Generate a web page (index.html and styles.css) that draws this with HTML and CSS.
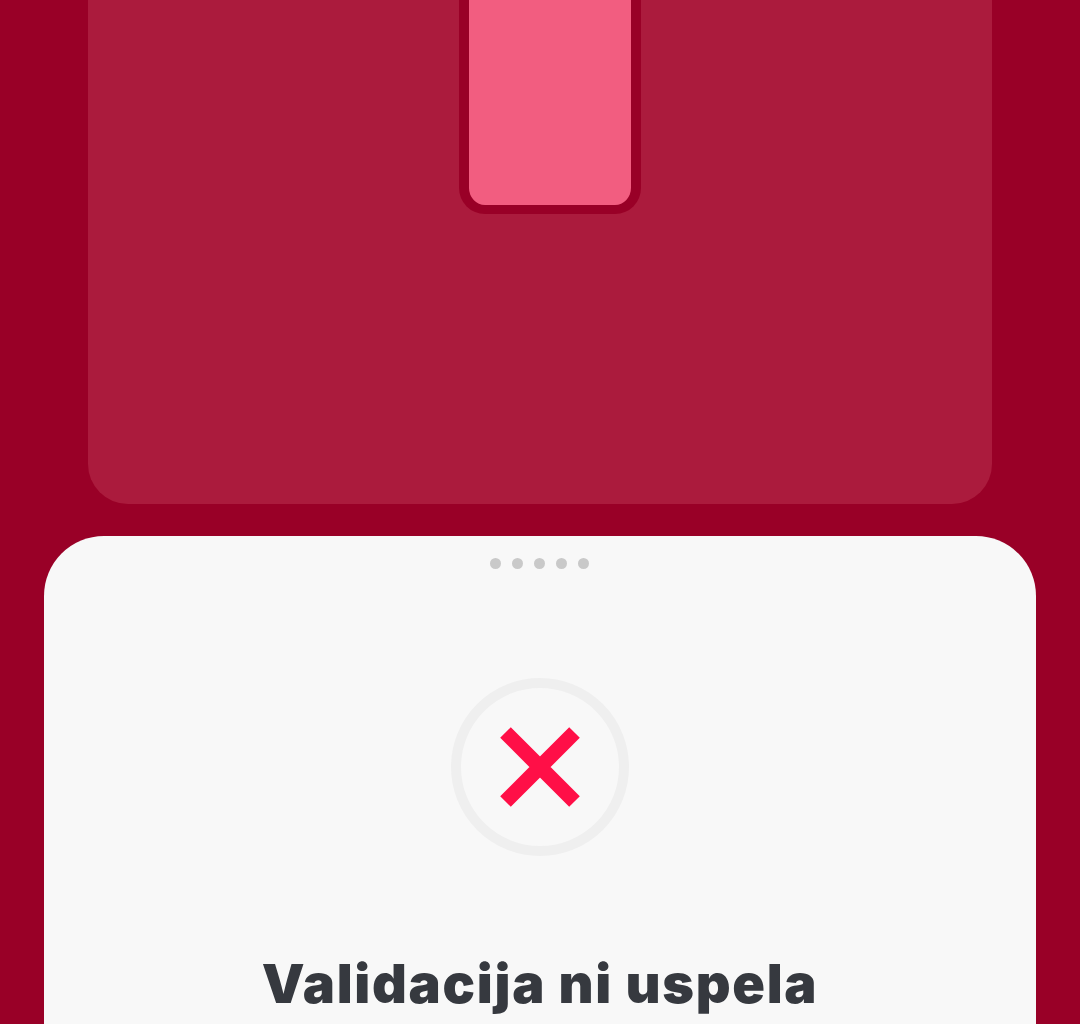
FILE: index.html
```html
<!DOCTYPE html>
<html lang="en">
<head>
    <meta charset="UTF-8">
    <meta name="viewport" content="width=device-width, initial-scale=1.0">
    <title>Validacija ni uspela</title>
    <link rel="stylesheet" href="styles.css">
</head>
<body>
    <div class="panel">
        <div class="phone"></div>
    </div>
    <div class="sheet">
        <div class="dots">
            <span></span><span></span><span></span><span></span><span></span>
        </div>
        <div class="result-icon">
            <svg width="80" height="80" viewBox="0 0 80 80">
                <path d="M5.5 5.5 L74.5 74.5 M74.5 5.5 L5.5 74.5" fill="none" stroke="#ff0f47" stroke-width="15" stroke-linecap="butt"/>
            </svg>
        </div>
        <h1 class="title">Validacija ni uspela</h1>
    </div>
</body>
</html>
```

FILE: styles.css
```css
html, body { height: 1024px; overflow: hidden; }
body { margin: 0; background: #990027; font-family: Inter, "Open Sans", sans-serif; }
.panel { height: 504px; margin: 0 88px; background: #ab1b3d; border-radius: 0 0 40px 40px; }
.phone { box-sizing: border-box; width: 182px; height: 214px; margin-left: 371px; background: #f25d80; border: solid #990027; border-width: 0 10px 9px; border-radius: 0 0 26px 26px; }
.sheet { height: 488px; margin: 32px 44px 0; background: #f8f8f8; border-radius: 60px 60px 0 0; display: flex; flex-direction: column; align-items: center; }
.dots { display: flex; gap: 11px; margin: 22px 1px 0 0; }
.dots span { width: 11px; height: 11px; border-radius: 50%; background: #c9c9c9; }
.result-icon { box-sizing: border-box; width: 178px; height: 178px; margin-top: 109px; border: 10px solid #efefef; border-radius: 50%; display: flex; align-items: center; justify-content: center; }
.title { margin: 94px 0 0; font-size: 54px; line-height: 68px; font-weight: 900; letter-spacing: 1.7px; color: #36393f; white-space: nowrap; }
```
